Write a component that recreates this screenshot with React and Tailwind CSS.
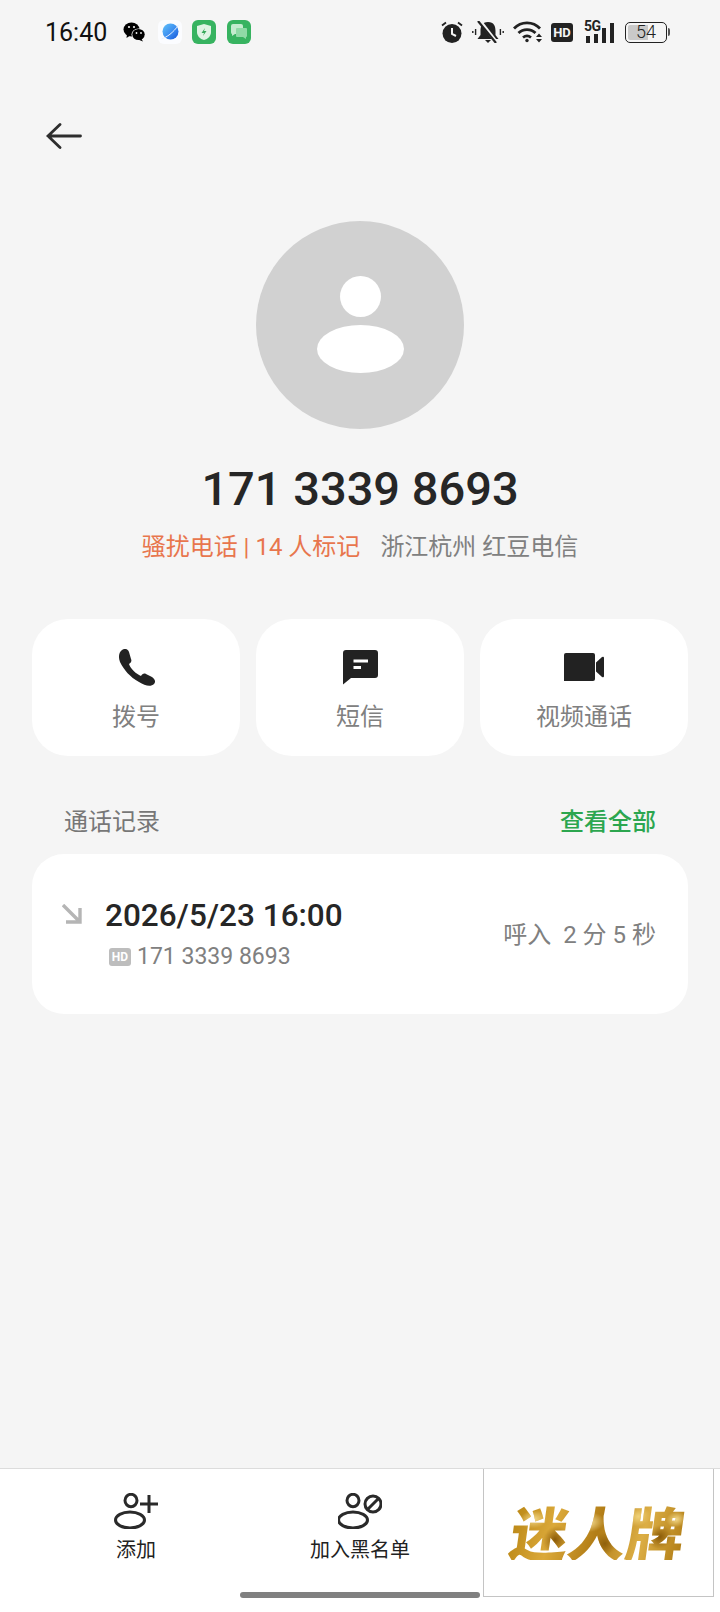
const FONT = "font-['Roboto','Noto_Sans_CJK_SC',sans-serif]";

const WeChatIcon = () => (
  <svg width="23" height="20" viewBox="0 0 23 20" fill="#000">
    <ellipse cx="8.5" cy="7.5" rx="8" ry="7" />
    <path d="M4 12 L3.5 16 L8 13 Z" />
    <ellipse cx="15.5" cy="12.5" rx="7" ry="6" fill="#f5f5f5" />
    <ellipse cx="15.5" cy="12.5" rx="6.2" ry="5.6" />
    <path d="M18 16 L20 19.5 L15 17.5 Z" />
    <circle cx="6" cy="5" r="1.1" fill="#f5f5f5" />
    <circle cx="11" cy="5" r="1.1" fill="#f5f5f5" />
    <circle cx="13.5" cy="11" r="0.9" fill="#f5f5f5" />
    <circle cx="18" cy="11" r="0.9" fill="#f5f5f5" />
  </svg>
);

const BrowserIcon = () => (
  <div className="w-6 h-6 rounded-md bg-[#fbfcff] flex items-center justify-center">
    <svg width="18" height="18" viewBox="0 0 18 18">
      <defs>
        <linearGradient id="planet" x1="0" y1="0" x2="1" y2="1">
          <stop offset="0" stopColor="#62c4fa" />
          <stop offset="0.55" stopColor="#3b8cf0" />
          <stop offset="1" stopColor="#1556d8" />
        </linearGradient>
      </defs>
      <circle cx="9.5" cy="8.5" r="8" fill="url(#planet)" />
      <path d="M0.5 16 C6 14 12 10 17.5 2" stroke="#e6f0ff" strokeWidth="1" fill="none" />
    </svg>
  </div>
);

const ShieldAppIcon = () => (
  <div className="w-6 h-6 rounded-md bg-[#37b360] flex items-center justify-center">
    <svg width="16" height="18" viewBox="0 0 16 18">
      <path d="M8 1 L15 3 V9 C15 13 12 16 8 17 C4 16 1 13 1 9 V3 Z" fill="#dff3e4" />
      <path d="M9 5 L5.5 10 H8 L7 13 L10.5 8 H8 Z" fill="#37a85a" />
    </svg>
  </div>
);

const ChatAppIcon = () => (
  <div className="w-6 h-6 rounded-md bg-[#37b360] flex items-center justify-center">
    <svg width="18" height="16" viewBox="0 0 18 16">
      <path d="M1 2 Q1 0 3 0 H11 Q13 0 13 2 V8 Q13 10 11 10 H5 L2 12 V10 Q1 10 1 8 Z" fill="#c4ebce" />
      <path d="M6 5 Q6 4 7 4 H16 Q17 4 17 5 V12 Q17 13 16 13 V15 L13 13 H7 Q6 13 6 12 Z" fill="#8fdaa6" />
    </svg>
  </div>
);

const AlarmIcon = () => (
  <svg width="22" height="22" viewBox="0 0 22 22">
    <circle cx="11" cy="12.5" r="9.5" fill="#222" />
    <path d="M11 7 V13 L15 15" stroke="#f5f5f5" strokeWidth="2" fill="none" />
    <path d="M1 4.5 L5 1.5 M21 4.5 L17 1.5" stroke="#222" strokeWidth="1.8" />
  </svg>
);

const MuteIcon = () => (
  <svg width="32" height="22" viewBox="0 0 32 22">
    <path d="M16 1 C10 1 8.5 5 8.5 10 V14 L5.5 18 H26.5 L23.5 14 V10 C23.5 5 22 1 16 1 Z" fill="#222" />
    <path d="M13 19 H19 L16 22 Z" fill="#222" />
    <path d="M8 0 L25 22" stroke="#f5f5f5" strokeWidth="3.5" />
    <path d="M6 0 L24 22" stroke="#222" strokeWidth="2.2" />
    <path d="M0.8 10 V12 M3.6 8 V14 M28.4 8 V14 M31.2 10 V12" stroke="#222" strokeWidth="1.4" />
  </svg>
);

const WifiIcon = () => (
  <svg width="31" height="22" viewBox="0 0 31 22" fill="none" stroke="#222" strokeWidth="2.8">
    <path d="M1 7.5 C8 0 20 0 27 7.5" />
    <path d="M5.5 12 C10 7.5 18 7.5 22.5 12" />
    <path d="M10 16.5 C12.5 14.5 15.5 14.5 18 16.5" />
    <circle cx="14" cy="19.5" r="1.7" fill="#222" stroke="none" />
    <path d="M23 16 L26 12.5 L29 16 Z M23 18 L26 21.5 L29 18 Z" fill="#222" stroke="none" />
  </svg>
);

const SignalIcon = () => (
  <div className="relative w-[31px] h-[22px] flex items-end gap-[4px] pl-[2px]">
    <span className="absolute left-0 top-[-2px] text-[14px] leading-[14px] font-bold tracking-[-0.5px] text-[#222]">5G</span>
    <div className="w-1 h-[7px] bg-[#222]" />
    <div className="w-1 h-[9px] bg-[#222]" />
    <div className="w-1 h-[15px] bg-[#222]" />
    <div className="w-1 h-[20px] bg-[#222]" />
  </div>
);

const BatteryIcon = () => (
  <div className="flex items-center">
    <div className="relative w-[42px] h-[21px] rounded-[5px] border-[1.5px] border-[#222] overflow-hidden flex items-center justify-center">
      <div className="absolute left-[2px] top-[2px] bottom-[2px] w-[20px] bg-[#c9c9c9] rounded-l-[2px]" />
      <span className="relative text-[18px] leading-none font-light text-[#222]">54</span>
    </div>
    <div className="w-[2px] h-[8px] bg-[#555] ml-[1px] rounded-r-sm" />
  </div>
);

const StatusBar = () => (
  <div className="h-[64px] flex items-center pl-[45px] pr-[50px]">
    <span className="text-[25px] leading-none text-[#111] w-[62px]">16:40</span>
    <div className="flex items-center ml-[16px]">
      <WeChatIcon />
      <div className="ml-[12px]"><BrowserIcon /></div>
      <div className="ml-[10px]"><ShieldAppIcon /></div>
      <div className="ml-[11px]"><ChatAppIcon /></div>
    </div>
    <div className="flex items-center ml-auto">
      <AlarmIcon />
      <div className="ml-[9px]"><MuteIcon /></div>
      <div className="ml-[9px]"><WifiIcon /></div>
      <div className="ml-[7px] w-[22px] h-[19px] rounded-[3px] bg-[#222] text-[#f5f5f5] text-[13px] leading-[19px] font-bold text-center">HD</div>
      <div className="ml-[11px]"><SignalIcon /></div>
      <div className="ml-[10px]"><BatteryIcon /></div>
    </div>
  </div>
);

const BackArrow = () => (
  <svg width="36" height="26" viewBox="0 0 36 26" fill="none" stroke="#2e2e2e" strokeWidth="2.8" strokeLinecap="round">
    <path d="M14 1.5 L2 13 L14 24.5 M2 13 H34.5" />
  </svg>
);

const PhoneIcon = () => (
  <svg width="37" height="37" viewBox="0 0 37 37" fill="#222">
    <path d="M4 1 C7 -1 10 0 11 3 L13 10 C14 12 13 14 11 15 C12 19 18 25 23 27 C24 25 26 24 28 25 L34 28 C37 30 38 33 36 35 C33 38 27 37 21 33 C12 28 6 21 2 13 C0 8 1 3 4 1 Z" />
  </svg>
);

const MessageIcon = () => (
  <svg width="35" height="35" viewBox="0 0 35 35">
    <path d="M0 3 Q0 0 3 0 H32 Q35 0 35 3 V25 Q35 28 32 28 H8 L0 34.5 Z" fill="#222" />
    <rect x="10.5" y="9.5" width="14.5" height="3" fill="#fff" />
    <rect x="10.5" y="16" width="7.5" height="3" fill="#fff" />
  </svg>
);

const VideoIcon = () => (
  <svg width="40" height="28" viewBox="0 0 40 28" fill="#222">
    <path d="M0 2 Q0 0 2 0 H29 Q31 0 31 2 V26 Q31 28 29 28 H0 Z" />
    <path d="M32 9.5 L38 4 Q40 3 40 5 V23 Q40 25 38 24 L32 18.5 Z" />
  </svg>
);

const ActionButton = ({ icon, label }) => (
  <div className="flex-1 h-[137px] bg-white rounded-[36px] flex flex-col items-center">
    <div className="h-[36px] mt-[30px] flex items-center justify-center">{icon}</div>
    <span className="mt-[16px] text-[24px] leading-[32px] text-[#808080]">{label}</span>
  </div>
);

const AddUserIcon = () => (
  <svg width="44" height="36" viewBox="0 0 44 36" fill="none" stroke="#2a2a2a" strokeWidth="3">
    <ellipse cx="17" cy="7.5" rx="6" ry="6.2" />
    <ellipse cx="16" cy="27" rx="14.5" ry="8" />
    <path d="M26 11 H44 M35 2 V20" />
  </svg>
);

const BlockUserIcon = () => (
  <svg width="44" height="36" viewBox="0 0 44 36" fill="none" stroke="#2a2a2a" strokeWidth="3">
    <ellipse cx="15" cy="7.5" rx="6" ry="6.2" />
    <ellipse cx="15" cy="27" rx="14.5" ry="8" />
    <circle cx="35" cy="11" r="8" />
    <path d="M30 16 L40 6" />
  </svg>
);

const BottomAction = ({ icon, label }) => (
  <div className="flex flex-col items-center pt-[24px]">
    {icon}
    <span className="mt-[7px] text-[20px] leading-[28px] text-[#222]">{label}</span>
  </div>
);

export default function App() {
  return (
    <div className={`relative w-[720px] h-[1612px] bg-[#f5f5f5] flex flex-col overflow-hidden ${FONT}`}>
      <StatusBar />

      {/* back */}
      <div className="pl-[46px] mt-[59px] h-[26px] flex items-center">
        <BackArrow />
      </div>

      {/* contact */}
      <div className="mt-[72px] flex flex-col items-center">
        <div className="w-[208px] h-[208px] rounded-full bg-[#d1d1d1] flex flex-col items-center pt-[55px]">
          <div className="w-[41px] h-[41px] rounded-full bg-white" />
          <div className="mt-[8px] w-[87px] h-[48px] rounded-[50%] bg-white" />
        </div>
        <div className="mt-[30px] text-[47px] leading-[60px] font-medium text-[#262626]">171 3339 8693</div>
        <div className="mt-[12px] text-[24px] leading-[32px] flex">
          <span className="text-[#e8764d]">骚扰电话 | 14 人标记</span>
          <span className="ml-[20px] text-[#808080]">浙江杭州 红豆电信</span>
        </div>
      </div>

      {/* actions */}
      <div className="mt-[56px] px-[32px] flex gap-[16px]">
        <ActionButton icon={<PhoneIcon />} label="拨号" />
        <ActionButton icon={<MessageIcon />} label="短信" />
        <ActionButton icon={<VideoIcon />} label="视频通话" />
      </div>

      {/* call log */}
      <div className="mt-[50px] px-[64px] flex justify-between text-[24px] leading-[32px]">
        <span className="text-[#777]">通话记录</span>
        <span className="text-[#2ca64f] font-medium">查看全部</span>
      </div>
      <div className="mt-[16px] mx-[32px] h-[160px] bg-white rounded-[32px] flex pl-[30px] pr-[32px]">
        <svg className="mt-[50px]" width="20" height="20" viewBox="0 0 20 20" fill="none" stroke="#b5b5b5" strokeWidth="3.4">
          <path d="M1 1 L18 18 M18 4 V18 H4" />
        </svg>
        <div className="ml-[23px] pt-[41px]">
          <div className="text-[31.5px] leading-[42px] font-medium text-[#262626]">2026/5/23 16:00</div>
          <div className="flex items-center pl-[4px] mt-[4px]">
            <div className="w-[22px] h-[18px] rounded-[3px] bg-[#bdbdbd] text-white text-[12px] leading-[18px] font-bold text-center">HD</div>
            <span className="ml-[6px] text-[23px] leading-[32px] text-[#808080]">171 3339 8693</span>
          </div>
        </div>
        <div className="ml-auto pt-[65px] text-[24px] leading-[32px] text-[#808080] whitespace-pre">呼入  2 分 5 秒</div>
      </div>

      <div className="flex-1" />

      {/* bottom bar */}
      <div className="h-[144px] bg-white border-t border-[#dcdcdc] flex">
        <div className="w-[240px] pl-[32px]"><BottomAction icon={<AddUserIcon />} label="添加" /></div>
        <div className="w-[240px]"><BottomAction icon={<BlockUserIcon />} label="加入黑名单" /></div>
        <div className="ml-[3px] w-[231px] h-[128px] border border-t-0 border-[#c4c4c4] flex items-center justify-center pb-[4px]">
          <span className="text-[58px] leading-none font-black font-['Noto_Sans_CJK_SC',sans-serif] skew-x-[-8deg] text-transparent bg-clip-text bg-[radial-gradient(ellipse_14px_9px_at_12%_30%,#f3d98a_0%,transparent_100%),radial-gradient(ellipse_12px_14px_at_26%_65%,#8a5a08_0%,transparent_100%),radial-gradient(ellipse_16px_10px_at_44%_35%,#f5dd94_0%,transparent_100%),radial-gradient(ellipse_12px_12px_at_55%_72%,#8f600b_0%,transparent_100%),radial-gradient(ellipse_12px_10px_at_72%_25%,#f0d27a_0%,transparent_100%),radial-gradient(ellipse_12px_12px_at_86%_60%,#8a5a08_0%,transparent_100%),radial-gradient(ellipse_10px_8px_at_94%_30%,#f3d98a_0%,transparent_100%),linear-gradient(100deg,#b98614_0%,#dba93a_25%,#b27d16_50%,#dcae45_75%,#b07c14_100%)]">迷人牌</span>
        </div>
      </div>

      {/* gesture bar */}
      <div className="absolute left-[240px] top-[1592px] w-[240px] h-[6px] rounded-full bg-[#808080]" />
    </div>
  );
}
